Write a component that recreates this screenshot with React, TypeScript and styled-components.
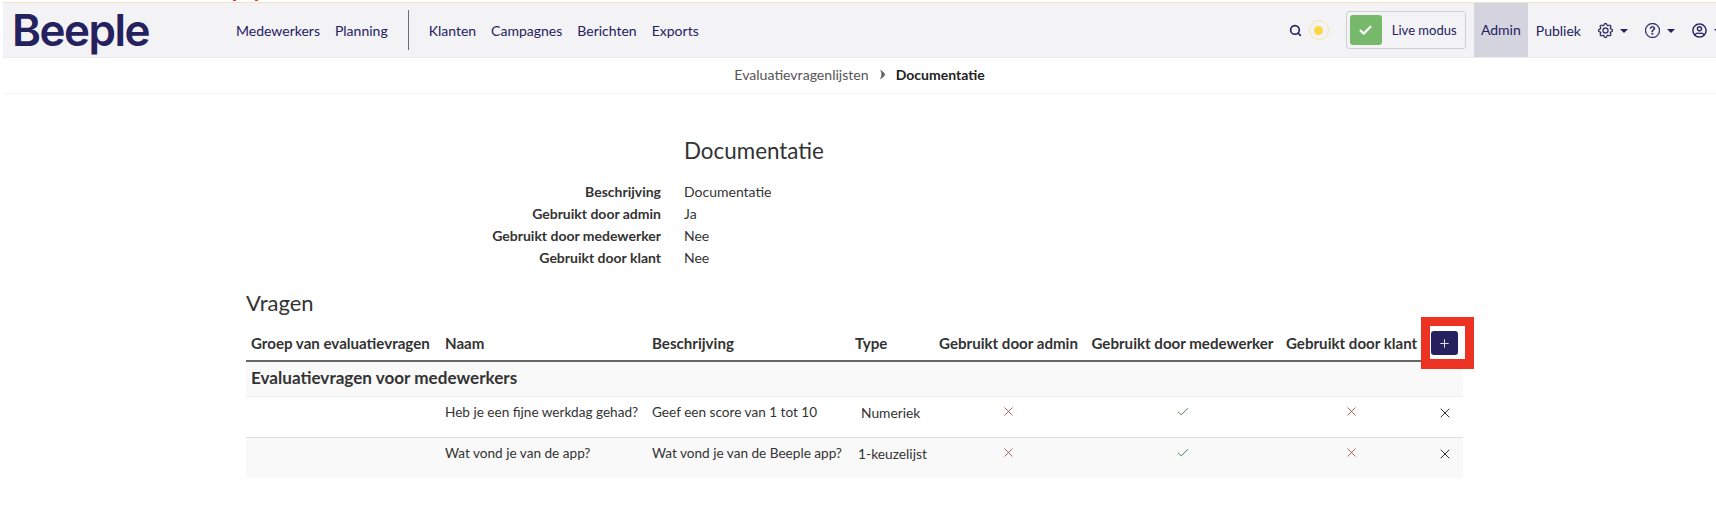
import React from 'react';
import styled, { createGlobalStyle } from 'styled-components';
import { Check, Plus, Search, X } from 'lucide-react';
import { BsGear, BsQuestionCircle } from 'react-icons/bs';
import { FaRegUserCircle } from 'react-icons/fa';

const GlobalStyle = createGlobalStyle`
  html, body {
    margin: 0;
    background: #fff;
    font-family: Lato, 'Open Sans', sans-serif;
    font-size: 14px;
    color: #333;
  }
  #root {
    overflow: hidden;
    height: 512px;
  }
`;

const Page = styled.div`
  position: relative;
  padding-left: 3px;
`;

const TopMarks = styled.div`
  height: 2px;
  display: flex;
  gap: 19px;
  padding-left: 230px;
`;

const TopMark = styled.span`
  width: 3px;
  height: 1px;
  background: #f0392b;
`;

const NavBar = styled.nav`
  height: 56px;
  display: flex;
  align-items: center;
  background: #f3f3f6;
  border-top: 1px solid #f5e3c8;
  border-bottom: 1px solid #ececef;
  box-sizing: border-box;
  color: #25215e;
`;

const Logo = styled.div`
  width: 233px;
  padding-left: 9px;
  box-sizing: border-box;
  font-family: Inter, Lato, sans-serif;
  font-size: 44px;
  font-weight: 600;
  letter-spacing: -1.5px;
  line-height: 50px;
  color: #25215e;
`;

const NavLink = styled.a`
  font-size: 14px;
  margin-right: 15px;
  white-space: nowrap;
`;

const PublicLink = styled(NavLink)`
  margin-right: 17px;
`;

const NavDivider = styled.span`
  width: 1px;
  height: 40px;
  background: #6d6d75;
  margin: 0 20px 0 5px;
`;

const NavRight = styled.div`
  margin-left: auto;
  display: flex;
  align-items: center;
  height: 100%;
`;

const SearchIcon = styled(Search)`
  width: 13px;
  height: 13px;
  margin-right: 7px;
`;

const StatusDot = styled.span`
  width: 18px;
  height: 18px;
  border: 1px solid #f7e7a6;
  border-radius: 50%;
  display: flex;
  align-items: center;
  justify-content: center;
  margin-right: 17px;

  &::after {
    content: '';
    width: 9px;
    height: 9px;
    border-radius: 50%;
    background: #fbd843;
  }
`;

const LiveButton = styled.div`
  width: 120px;
  height: 38px;
  border: 1px solid #cfcfd4;
  border-radius: 3px;
  box-sizing: border-box;
  display: flex;
  align-items: center;
  padding-left: 3px;
  font-size: 13px;
  margin-right: 8px;
`;

const LiveCheck = styled.span`
  width: 32px;
  height: 30px;
  background: #76b96a;
  border-radius: 3px;
  display: flex;
  align-items: center;
  justify-content: center;
  color: #fff;
  margin-right: 10px;
`;

const AdminTab = styled.a`
  height: 54px;
  width: 54px;
  background: #d4d4df;
  display: flex;
  align-items: center;
  justify-content: center;
  margin-right: 8px;
  margin-top: -1px;
`;

const IconMenu = styled.span`
  display: flex;
  align-items: center;
  gap: 7px;
  margin-right: 17px;
  font-size: 14px;

  &:last-child {
    margin-right: -6px;
  }

  svg {
    stroke: currentColor;
    stroke-width: 0.3px;
  }

  &::after {
    content: '';
    border-left: 4px solid transparent;
    border-right: 4px solid transparent;
    border-top: 4px solid #25215e;
    margin-top: 2px;
  }
`;

const Breadcrumb = styled.div`
  height: 36px;
  padding-bottom: 2px;
  display: flex;
  align-items: center;
  justify-content: center;
  gap: 10px;
  border-bottom: 1px solid #f6f6f6;
  box-sizing: border-box;
  font-size: 14.1px;
  color: #555;
`;

const CrumbCurrent = styled.strong`
  color: #222;
  font-weight: 700;
  font-size: 14px;
`;

const Main = styled.main`
  padding-left: 243px;
  width: 1220px;
  box-sizing: border-box;
`;

const DetailTitle = styled.h2`
  margin: 42px 0 15px 438px;
  font-size: 22.4px;
  line-height: 30px;
  font-weight: 400;
  color: #333;
`;

const DetailGrid = styled.dl`
  display: grid;
  grid-template-columns: 415px auto;
  column-gap: 23px;
  grid-auto-rows: 22px;
  margin: 0;
  line-height: 22px;
`;

const DetailLabel = styled.dt`
  text-align: right;
  font-weight: 700;
`;

const DetailValue = styled.dd`
  margin: 0;
`;

const SectionTitle = styled.h3`
  margin: 19px 0 8px;
  font-size: 22px;
  line-height: 30px;
  font-weight: 400;
`;

const Table = styled.table`
  width: 1217px;
  table-layout: fixed;
  border-collapse: collapse;
`;

const HeadCell = styled.th<{ $center?: boolean }>`
  padding: 0 5px;
  height: 34px;
  font-weight: 700;
  font-size: 15.1px;
  white-space: nowrap;
  text-align: ${(p) => (p.$center ? 'center' : 'left')};
  border-bottom: 2px solid #666;
`;

const AddCell = styled.th`
  position: relative;
  padding: 0;
  border-bottom: 2px solid #666;
`;

const AddButton = styled.button`
  width: 27px;
  height: 24px;
  margin-left: 10px;
  background: #25215e;
  border: 0;
  border-radius: 3px;
  color: #fff;
  display: flex;
  align-items: center;
  justify-content: center;
  padding: 0;
`;

const Highlight = styled.span`
  position: absolute;
  left: 0;
  top: -9px;
  width: 53px;
  height: 52px;
  border: solid #ec3223;
  border-width: 9px 9px 10px 9px;
  box-sizing: border-box;
`;

const GroupCell = styled.td`
  height: 35px;
  padding: 0 5px 2px;
  background: #f9f9f9;
  font-weight: 700;
  font-size: 17.1px;
  border-bottom: 1px solid #efefef;
  box-sizing: border-box;
`;

const Row = styled.tr<{ $striped?: boolean }>`
  background: ${(p) => (p.$striped ? '#f9f9f9' : '#fff')};
  border-bottom: 1px solid ${(p) => (p.$striped ? 'transparent' : '#dedede')};
`;

const Cell = styled.td`
  height: 41px;
  padding: 0 5px 9px;
  white-space: nowrap;
  font-size: 13.6px;
  box-sizing: border-box;
`;

const TypeCell = styled(Cell)<{ $indent: number }>`
  padding-left: ${(p) => p.$indent}px;
  font-size: 13.8px;
`;

const FlagCell = styled.td`
  height: 41px;
  padding: 0 5px 13px;
  text-align: center;
  box-sizing: border-box;

  svg {
    vertical-align: middle;
  }
`;

const DeleteCell = styled.td`
  padding: 0 0 8px 16px;

  svg {
    display: block;
  }
`;

const Flag = ({ on }: { on: boolean }) =>
  on ? <Check size={14} strokeWidth={1.5} color="#2b6e38" /> : <X size={15} strokeWidth={1.3} color="#a8433c" />;

const details = [
  ['Beschrijving', 'Documentatie'],
  ['Gebruikt door admin', 'Ja'],
  ['Gebruikt door medewerker', 'Nee'],
  ['Gebruikt door klant', 'Nee'],
];

const questions = [
  { name: 'Heb je een fijne werkdag gehad?', desc: 'Geef een score van 1 tot 10', type: 'Numeriek', indent: 11 },
  { name: 'Wat vond je van de app?', desc: 'Wat vond je van de Beeple app?', type: '1-keuzelijst', indent: 8 },
];

export default function App() {
  return (
    <Page>
      <GlobalStyle />
      <TopMarks>
        <TopMark />
        <TopMark />
      </TopMarks>
      <NavBar>
        <Logo>Beeple</Logo>
        <NavLink>Medewerkers</NavLink>
        <NavLink>Planning</NavLink>
        <NavDivider />
        <NavLink>Klanten</NavLink>
        <NavLink>Campagnes</NavLink>
        <NavLink>Berichten</NavLink>
        <NavLink>Exports</NavLink>
        <NavRight>
          <SearchIcon strokeWidth={3} />
          <StatusDot />
          <LiveButton>
            <LiveCheck>
              <Check size={15} strokeWidth={3.5} />
            </LiveCheck>
            Live modus
          </LiveButton>
          <AdminTab>Admin</AdminTab>
          <PublicLink>Publiek</PublicLink>
          <IconMenu>
            <BsGear size={15} />
          </IconMenu>
          <IconMenu>
            <BsQuestionCircle size={15} />
          </IconMenu>
          <IconMenu>
            <FaRegUserCircle size={15} />
          </IconMenu>
        </NavRight>
      </NavBar>
      <Breadcrumb>
        Evaluatievragenlijsten
        <svg width="7" height="11" viewBox="0 0 6 10">
          <path d="M0.5 0.5 C3.5 2 4.5 3.5 5.5 5 C4.5 6.5 3.5 8 0.5 9.5 C2.5 7 2.5 3 0.5 0.5Z" fill="#666" />
        </svg>
        <CrumbCurrent>Documentatie</CrumbCurrent>
      </Breadcrumb>
      <Main>
        <DetailTitle>Documentatie</DetailTitle>
        <DetailGrid>
          {details.map(([label, value]) => (
            <React.Fragment key={label}>
              <DetailLabel>{label}</DetailLabel>
              <DetailValue>{value}</DetailValue>
            </React.Fragment>
          ))}
        </DetailGrid>
        <SectionTitle>Vragen</SectionTitle>
        <Table>
          <colgroup>
            <col style={{ width: 194 }} />
            <col style={{ width: 207 }} />
            <col style={{ width: 203 }} />
            <col style={{ width: 83 }} />
            <col style={{ width: 151 }} />
            <col style={{ width: 197 }} />
            <col style={{ width: 140 }} />
            <col style={{ width: 42 }} />
          </colgroup>
          <thead>
            <tr>
              <HeadCell>Groep van evaluatievragen</HeadCell>
              <HeadCell>Naam</HeadCell>
              <HeadCell>Beschrijving</HeadCell>
              <HeadCell>Type</HeadCell>
              <HeadCell $center>Gebruikt door admin</HeadCell>
              <HeadCell $center>Gebruikt door medewerker</HeadCell>
              <HeadCell $center>Gebruikt door klant</HeadCell>
              <AddCell>
                <AddButton>
                  <Plus size={13} strokeWidth={1.6} />
                </AddButton>
                <Highlight />
              </AddCell>
            </tr>
          </thead>
          <tbody>
            <tr>
              <GroupCell colSpan={8}>Evaluatievragen voor medewerkers</GroupCell>
            </tr>
            {questions.map((q, i) => (
              <Row key={q.name} $striped={i === 1}>
                <Cell />
                <Cell>{q.name}</Cell>
                <Cell>{q.desc}</Cell>
                <TypeCell $indent={q.indent}>{q.type}</TypeCell>
                <FlagCell>
                  <Flag on={false} />
                </FlagCell>
                <FlagCell>
                  <Flag on />
                </FlagCell>
                <FlagCell>
                  <Flag on={false} />
                </FlagCell>
                <DeleteCell>
                  <X size={16} strokeWidth={1.4} color="#222" />
                </DeleteCell>
              </Row>
            ))}
          </tbody>
        </Table>
      </Main>
    </Page>
  );
}
